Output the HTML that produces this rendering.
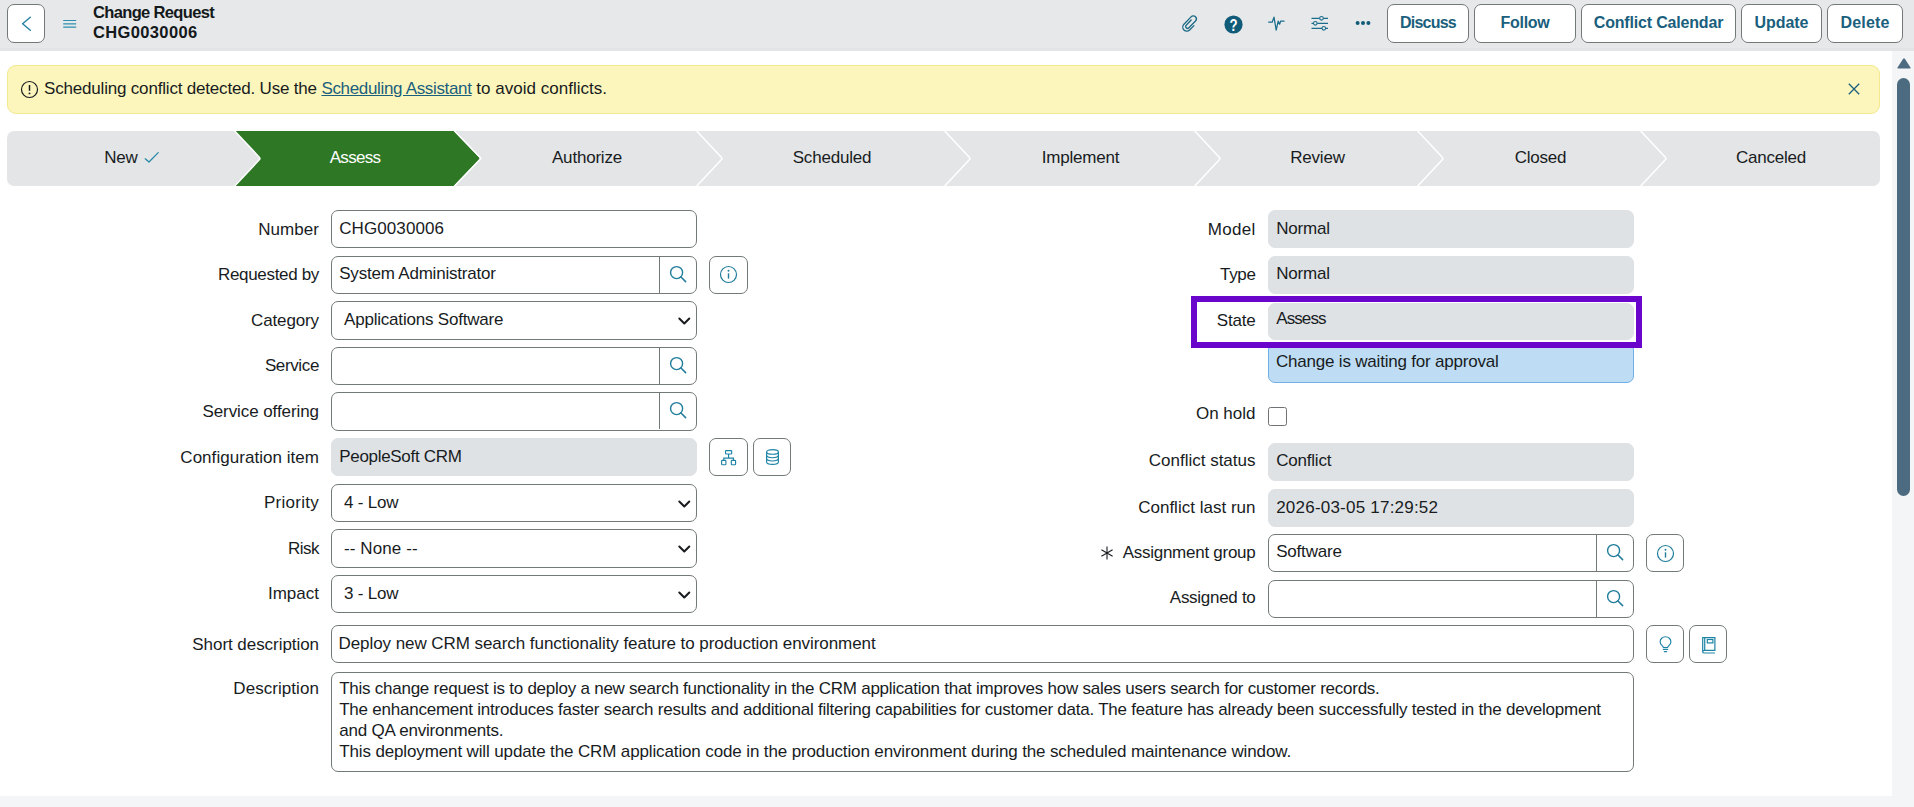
<!DOCTYPE html>
<html lang="en">
<head>
<meta charset="utf-8">
<title>Change Request CHG0030006</title>
<style>
*{box-sizing:border-box;margin:0;padding:0}
html,body{width:1914px;height:807px;overflow:hidden;background:#f4f5f7}
body{font-family:"Liberation Sans",sans-serif;font-size:17px;color:#181c1e;letter-spacing:-0.2px;position:relative}
.abs{position:absolute}
#hdr{position:absolute;left:0;top:0;width:1914px;height:51px;background:#e7e8ea;border-bottom:3px solid #e3e4e5}
#main{position:absolute;left:0;top:51px;width:1892px;height:745px;background:#fff}
.btn{position:absolute;top:4px;height:39px;background:#fff;border:1px solid #737879;border-radius:7px;color:#1a5f7d;font-weight:700;font-size:16px;line-height:36px;text-align:center;white-space:nowrap}
.title{position:absolute;left:93px;font-weight:700;font-size:16.5px;line-height:20px;color:#14191b;letter-spacing:-0.55px;white-space:nowrap}
#banner{position:absolute;left:7px;top:65px;width:1873px;height:49px;background:#fcf6bc;border:1px solid #f3e98f;border-radius:9px}
#banner .msg{position:absolute;left:36px;top:0;line-height:45px;white-space:nowrap}
#banner a{color:#1a5f7d;text-decoration:underline}
.lbl{position:absolute;height:38px;line-height:38px;text-align:right;white-space:nowrap}
.L{left:0;width:319px}
.R{left:900px;width:1355.5px;left:0}
.inp{position:absolute;height:38px;border:1px solid #737879;border-radius:7px;background:#fff;line-height:35px;padding-left:7.2px;white-space:nowrap;overflow:hidden}
.ro{border-color:#dfe2e5;background:#dfe2e5}
.c1{left:331px;width:366px}
.c2{left:1268px;width:366px}
.sel{padding-left:12px;line-height:36px}
.look{position:absolute;right:0;top:0;width:37px;height:36px;border-left:1px solid #737879}
.ibtn{position:absolute;width:39px;height:38px;border:1px solid #737879;border-radius:7px;background:#fff}
svg{position:absolute;overflow:visible}
</style>
</head>
<body>
<div id="hdr">
<div class="abs" style="left:7px;top:4px;width:38px;height:39px;background:#fff;border:1px solid #737879;border-radius:7px"></div>
<svg style="left:0;top:0" width="50" height="50" viewBox="0 0 50 50"><path d="M30.3 17.3 L22.6 23.8 L30.3 30.3" fill="none" stroke="#2a84a3" stroke-width="1.5" stroke-linecap="round" stroke-linejoin="round"/></svg>
<svg style="left:63px;top:19px" width="14" height="10" viewBox="0 0 14 10"><path d="M0.2 1.5H13.2M0.2 4.8H13.2M0.2 8.1H13.2" fill="none" stroke="#2a8fb0" stroke-width="1.2"/></svg>
<div class="title" style="top:2px;letter-spacing:-0.65px">Change Request</div>
<div class="title" style="top:22px;letter-spacing:0.36px">CHG0030006</div>
<svg style="left:1175px;top:8px" width="30" height="30" viewBox="0 0 30 30"><path transform="translate(14.8 15.4) scale(0.9) translate(-15.2 -15.6)" d="M19.8 18.1 L15.0 23.0 C13.2 24.8 10.4 24.6 8.7 22.9 C7.0 21.2 7.0 18.4 8.7 16.6 L16.6 8.4 C18.0 6.9 20.2 6.9 21.5 8.2 C22.8 9.5 22.8 11.6 21.5 13.0 L14.2 20.4 C13.3 21.3 12.0 21.3 11.2 20.5 C10.4 19.7 10.4 18.4 11.2 17.6 L16.7 11.8" fill="none" stroke="#1b6a86" stroke-width="1.45" stroke-linecap="round"/></svg>
<svg style="left:1224px;top:15px" width="19" height="19" viewBox="0 0 19 19"><circle cx="9.5" cy="9.5" r="9.1" fill="#0f5b78"/><text transform="translate(9.5 15.7) scale(0.8 1)" x="0" y="0" text-anchor="middle" font-family="Liberation Sans, sans-serif" font-weight="700" font-size="16.5" fill="#fff" letter-spacing="0">?</text></svg>
<svg style="left:1268px;top:16px" width="17" height="16" viewBox="0 0 17 16"><path d="M0.7 6.2H4.2L6 1.2L8.2 14.2L10.2 5.2L11.6 8.2L12.6 5.2H16" fill="none" stroke="#1a6d8c" stroke-width="1.25" stroke-linejoin="round" stroke-linecap="round"/></svg>
<svg style="left:1311px;top:16px" width="18" height="15" viewBox="0 0 18 15"><path d="M0.5 2.3H17M0.5 7.3H17M0.5 12.3H17" fill="none" stroke="#1a6d8c" stroke-width="1.2"/><circle cx="10.5" cy="2.3" r="1.8" fill="#e7e8ea" stroke="#1a6d8c" stroke-width="1.1"/><circle cx="4.3" cy="7.3" r="1.8" fill="#e7e8ea" stroke="#1a6d8c" stroke-width="1.1"/><circle cx="12.8" cy="12.3" r="1.8" fill="#e7e8ea" stroke="#1a6d8c" stroke-width="1.1"/></svg>
<svg style="left:1355px;top:20px" width="16" height="6" viewBox="0 0 16 6"><circle cx="2.6" cy="3" r="2" fill="#0f5b78"/><circle cx="8" cy="3" r="2" fill="#0f5b78"/><circle cx="13.4" cy="3" r="2" fill="#0f5b78"/></svg>
<div class="btn" style="left:1387px;width:82px;letter-spacing:-0.8px">Discuss</div>
<div class="btn" style="left:1474px;width:102px;letter-spacing:-0.31px">Follow</div>
<div class="btn" style="left:1581px;width:155px;letter-spacing:-0.18px">Conflict Calendar</div>
<div class="btn" style="left:1741px;width:81px;letter-spacing:-0.07px">Update</div>
<div class="btn" style="left:1827px;width:76px;letter-spacing:0.18px">Delete</div>
</div>
<div id="main"></div>
<div id="banner">
<svg style="left:12px;top:14px" width="19" height="19" viewBox="0 0 19 19"><circle cx="9.5" cy="9.5" r="8" fill="none" stroke="#181c1e" stroke-width="1.2"/><path d="M9.5 5V10.8" stroke="#181c1e" stroke-width="1.5"/><circle cx="9.5" cy="13.4" r="0.95" fill="#181c1e"/></svg>
<div class="msg"><span style="letter-spacing:-0.185px">Scheduling conflict detected. Use the </span><a style="letter-spacing:-0.335px">Scheduling Assistant</a><span style="letter-spacing:0.015px"> to avoid conflicts.</span></div>
<svg style="left:1840px;top:17px" width="12" height="12" viewBox="0 0 12 12"><path d="M0.8 0.8L11.2 11.2M11.2 0.8L0.8 11.2" stroke="#1a5f7d" stroke-width="1.3" fill="none"/></svg>
</div>
<svg style="left:7px;top:131px" width="1873" height="55" viewBox="0 0 1873 55">
<defs><clipPath id="fc"><rect x="0" y="0" width="1873" height="55" rx="7" ry="7"/></clipPath></defs>
<g clip-path="url(#fc)"><rect x="0" y="0" width="1873" height="55" fill="#e4e5e7"/>
<path d="M227.3 0 H446.8 L471.9 26.3 Q472.9 27.4 471.9 28.5 L446.8 55 H227.3 L253.3 27.5 Z" fill="#2e7725"/>
<path d="M226.8 -1 L252.3 26.2 Q253.5 27.5 252.3 28.8 L226.8 56" fill="none" stroke="#fff" stroke-width="1.5" stroke-linejoin="round"/>
<path d="M446.6 -1 L473.2 26.6 Q474 27.4 473.2 28.2 L446.6 56" fill="none" stroke="#fff" stroke-width="1.5" stroke-linejoin="round"/>
<path d="M688.8 -1 L714.3 26.2 Q715.5 27.5 714.3 28.8 L688.8 56" fill="none" stroke="#fff" stroke-width="1.5" stroke-linejoin="round"/>
<path d="M936.8 -1 L962.3 26.2 Q963.5 27.5 962.3 28.8 L936.8 56" fill="none" stroke="#fff" stroke-width="1.5" stroke-linejoin="round"/>
<path d="M1186.8 -1 L1212.3 26.2 Q1213.5 27.5 1212.3 28.8 L1186.8 56" fill="none" stroke="#fff" stroke-width="1.5" stroke-linejoin="round"/>
<path d="M1409.8 -1 L1435.3 26.2 Q1436.5 27.5 1435.3 28.8 L1409.8 56" fill="none" stroke="#fff" stroke-width="1.5" stroke-linejoin="round"/>
<path d="M1632.8 -1 L1658.3 26.2 Q1659.5 27.5 1658.3 28.8 L1632.8 56" fill="none" stroke="#fff" stroke-width="1.5" stroke-linejoin="round"/>
</g>
<text x="114" y="31.6" text-anchor="middle" font-family="Liberation Sans, sans-serif" font-size="17" fill="#181c1e">New</text>
<text x="348" y="31.6" text-anchor="middle" font-family="Liberation Sans, sans-serif" font-size="17" fill="#fff" letter-spacing="-0.7">Assess</text>
<text x="580" y="31.6" text-anchor="middle" font-family="Liberation Sans, sans-serif" font-size="17" fill="#181c1e">Authorize</text>
<text x="825" y="31.6" text-anchor="middle" font-family="Liberation Sans, sans-serif" font-size="17" fill="#181c1e">Scheduled</text>
<text x="1073.5" y="31.6" text-anchor="middle" font-family="Liberation Sans, sans-serif" font-size="17" fill="#181c1e">Implement</text>
<text x="1310.5" y="31.6" text-anchor="middle" font-family="Liberation Sans, sans-serif" font-size="17" fill="#181c1e">Review</text>
<text x="1533.5" y="31.6" text-anchor="middle" font-family="Liberation Sans, sans-serif" font-size="17" fill="#181c1e">Closed</text>
<text x="1764" y="31.6" text-anchor="middle" font-family="Liberation Sans, sans-serif" font-size="17" fill="#181c1e">Canceled</text>
<path d="M138.2 27.8 L142 31 L151.2 21.6" fill="none" stroke="#2587a6" stroke-width="1.25" stroke-linecap="round" stroke-linejoin="round"/>
</svg>
<svg style="left:1892px;top:50px" width="22" height="757" viewBox="0 0 22 757"><path d="M5.5 17.5 L11 9 Q12 7.6 13 9 L18.5 17.5 Q19 18.6 17.8 18.6 H6.2 Q5 18.6 5.5 17.5Z" fill="#4d6b80"/><rect x="5" y="28" width="13" height="418" rx="6.5" fill="#4d6b80"/></svg>
<div class="abs" style="left:1268px;top:343px;width:366px;height:40px;background:#bedcf3;border:1px solid #6fb0e8;border-radius:7px;padding:8px 0 0 7px;line-height:20px;white-space:nowrap">Change is waiting for approval</div>
<div class="lbl L" style="top:211px;letter-spacing:0.05px">Number</div><div class="inp c1" style="top:210px;letter-spacing:0.1px">CHG0030006</div>
<div class="lbl L" style="top:256px;letter-spacing:-0.325px">Requested by</div><div class="inp c1" style="top:256px;line-height:33px">System Administrator<div class="look"><svg style="left:9px;top:8px" width="19" height="19" viewBox="0 0 19 19"><circle cx="7.6" cy="7.6" r="6" fill="none" stroke="#1f7c9b" stroke-width="1.4"/><path d="M12 12L16.6 16.6" stroke="#1f7c9b" stroke-width="1.5" stroke-linecap="round"/></svg></div></div><div class="ibtn" style="left:709px;top:256px"><svg style="left:9px;top:8px" width="19" height="19" viewBox="0 0 19 19"><circle cx="9.5" cy="9.5" r="8" fill="none" stroke="#1f7c9b" stroke-width="1.2"/><path d="M9.5 8.3V13.6" stroke="#1f7c9b" stroke-width="1.4"/><circle cx="9.5" cy="5.8" r="0.95" fill="#1f7c9b"/></svg></div>
<div class="lbl L" style="top:302px;letter-spacing:-0.125px">Category</div><div class="inp c1 sel" style="top:301px;height:39px">Applications Software<svg style="right:5px;top:14.5px" width="14" height="9" viewBox="0 0 14 9"><path d="M2.3 1.5L7.3 6.5L12.3 1.5" fill="none" stroke="#181c1e" stroke-width="2" stroke-linecap="round" stroke-linejoin="round"/></svg></div>
<div class="lbl L" style="top:347px;letter-spacing:-0.37px">Service</div><div class="inp c1" style="top:347px"><div class="look"><svg style="left:9px;top:8px" width="19" height="19" viewBox="0 0 19 19"><circle cx="7.6" cy="7.6" r="6" fill="none" stroke="#1f7c9b" stroke-width="1.4"/><path d="M12 12L16.6 16.6" stroke="#1f7c9b" stroke-width="1.5" stroke-linecap="round"/></svg></div></div>
<div class="lbl L" style="top:393px;letter-spacing:-0.08px">Service offering</div><div class="inp c1" style="top:392px;height:39px"><div class="look"><svg style="left:9px;top:8px" width="19" height="19" viewBox="0 0 19 19"><circle cx="7.6" cy="7.6" r="6" fill="none" stroke="#1f7c9b" stroke-width="1.4"/><path d="M12 12L16.6 16.6" stroke="#1f7c9b" stroke-width="1.5" stroke-linecap="round"/></svg></div></div>
<div class="lbl L" style="top:439px;letter-spacing:0.04px">Configuration item</div><div class="inp c1 ro" style="top:438px;letter-spacing:-0.3px">PeopleSoft CRM</div><div class="ibtn" style="left:709px;top:438px"><svg style="left:10.9px;top:10.8px" width="15" height="15.4" viewBox="0 0 15 15.4"><g fill="none" stroke="#1e84a6" stroke-width="1.15"><rect x="4.5" y="0.6" width="6.2" height="3.4" rx="0.7"/><rect x="0.6" y="10.4" width="4.3" height="4.4" rx="0.7"/><rect x="10.3" y="10.4" width="4.3" height="4.4" rx="0.7"/><path d="M7.6 4V8.2M2.75 10.4V8.2H12.45V10.4"/></g></svg></div><div class="ibtn" style="left:753px;top:438px;width:38px"><svg style="left:11.6px;top:9.9px" width="13" height="16" viewBox="0 0 13 16"><g fill="none" stroke="#1e84a6" stroke-width="1.15"><ellipse cx="6.5" cy="2.9" rx="5.9" ry="2.3"/><path d="M0.6 2.9V12.9C0.6 14.2 3.2 15.3 6.5 15.3S12.4 14.2 12.4 12.9V2.9"/><path d="M0.6 6.3C0.6 7.6 3.2 8.7 6.5 8.7S12.4 7.6 12.4 6.3"/><path d="M0.6 9.6C0.6 10.9 3.2 12 6.5 12S12.4 10.9 12.4 9.6"/></g></svg></div>
<div class="lbl L" style="top:484px;letter-spacing:0.275px">Priority</div><div class="inp c1 sel" style="top:484px">4 - Low<svg style="right:5px;top:14.5px" width="14" height="9" viewBox="0 0 14 9"><path d="M2.3 1.5L7.3 6.5L12.3 1.5" fill="none" stroke="#181c1e" stroke-width="2" stroke-linecap="round" stroke-linejoin="round"/></svg></div>
<div class="lbl L" style="top:530px;letter-spacing:-0.5px">Risk</div><div class="inp c1 sel" style="top:529px;height:39px;line-height:38px;letter-spacing:0.1px">-- None --<svg style="right:5px;top:14.5px" width="14" height="9" viewBox="0 0 14 9"><path d="M2.3 1.5L7.3 6.5L12.3 1.5" fill="none" stroke="#181c1e" stroke-width="2" stroke-linecap="round" stroke-linejoin="round"/></svg></div>
<div class="lbl L" style="top:575px;letter-spacing:0px">Impact</div><div class="inp c1 sel" style="top:575px">3 - Low<svg style="right:5px;top:14.5px" width="14" height="9" viewBox="0 0 14 9"><path d="M2.3 1.5L7.3 6.5L12.3 1.5" fill="none" stroke="#181c1e" stroke-width="2" stroke-linecap="round" stroke-linejoin="round"/></svg></div>
<div class="lbl L" style="top:626px;letter-spacing:-0.05px">Short description</div><div class="inp" style="left:331px;width:1303px;top:625px;padding-left:6.5px;letter-spacing:-0.063px">Deploy new CRM search functionality feature to production environment</div><div class="ibtn" style="left:1646px;top:625px;width:38px"><svg style="left:11.9px;top:10px" width="13" height="17" viewBox="0 0 13 17"><g fill="none" stroke="#1e84a6" stroke-width="1.15" stroke-linecap="round"><path d="M4.4 11.5C4.4 9.9 1.1 8.9 1.1 5.9C1.1 3 3.5 0.7 6.5 0.7S11.9 3 11.9 5.9C11.9 8.9 8.6 9.9 8.6 11.5Z"/><path d="M4.4 13.4H8.6M5.3 15.6H7.7"/></g></svg></div><div class="ibtn" style="left:1689px;top:625px;width:38px"><svg style="left:11.8px;top:10.9px" width="14" height="17" viewBox="0 0 14 17"><g fill="none" stroke="#1e84a6" stroke-width="1.2"><path d="M0.7 14.3V0.7H12.9V13.4H2.4C1.3 13.4 0.7 13.9 0.7 14.7S1.3 16 2.4 16H12.9"/><path d="M2.7 0.7V13.4"/><rect x="5.3" y="2.5" width="5.6" height="3.4"/></g></svg></div>
<div class="lbl" style="left:900px;width:355.5px;top:211px;letter-spacing:0.3px">Model</div><div class="inp c2 ro" style="top:210px">Normal</div>
<div class="lbl" style="left:900px;width:355.5px;top:256px;letter-spacing:-0.37px">Type</div><div class="inp c2 ro" style="top:256px;line-height:33px">Normal</div>
<div class="lbl" style="left:900px;width:355.5px;top:302px">State</div><div class="inp c2 ro" style="top:303px;height:37px;line-height:30px;letter-spacing:-0.9px">Assess</div>
<div class="lbl" style="left:900px;width:355.5px;top:395px;letter-spacing:0px">On hold</div><div class="abs" style="left:1268px;top:407px;width:19px;height:19px;border:1px solid #6e7274;border-radius:2.5px;background:#fff"></div>
<div class="lbl" style="left:900px;width:355.5px;top:442px;letter-spacing:0px">Conflict status</div><div class="inp c2 ro" style="top:443px;line-height:33px">Conflict</div>
<div class="lbl" style="left:900px;width:355.5px;top:489px;letter-spacing:0.01px">Conflict last run</div><div class="inp c2 ro" style="top:489px;letter-spacing:0.22px">2026-03-05 17:29:52</div>
<div class="lbl" style="left:900px;width:355.5px;top:534px;letter-spacing:-0.26px">Assignment group</div><div class="inp c2" style="top:534px;line-height:33px">Software<div class="look"><svg style="left:9px;top:8px" width="19" height="19" viewBox="0 0 19 19"><circle cx="7.6" cy="7.6" r="6" fill="none" stroke="#1f7c9b" stroke-width="1.4"/><path d="M12 12L16.6 16.6" stroke="#1f7c9b" stroke-width="1.5" stroke-linecap="round"/></svg></div></div><div class="ibtn" style="left:1646px;top:534px;width:38px"><svg style="left:9px;top:9.3px" width="19" height="19" viewBox="0 0 19 19"><circle cx="9.5" cy="9.5" r="8" fill="none" stroke="#1f7c9b" stroke-width="1.2"/><path d="M9.5 8.3V13.6" stroke="#1f7c9b" stroke-width="1.4"/><circle cx="9.5" cy="5.8" r="0.95" fill="#1f7c9b"/></svg></div>
<div class="lbl" style="left:900px;width:355.5px;top:579px;letter-spacing:-0.29px">Assigned to</div><div class="inp c2" style="top:580px"><div class="look"><svg style="left:9px;top:8px" width="19" height="19" viewBox="0 0 19 19"><circle cx="7.6" cy="7.6" r="6" fill="none" stroke="#1f7c9b" stroke-width="1.4"/><path d="M12 12L16.6 16.6" stroke="#1f7c9b" stroke-width="1.5" stroke-linecap="round"/></svg></div></div>
<svg style="left:1100px;top:546px" width="14" height="14" viewBox="0 0 14 14"><path d="M7 0.5V13.5M1.4 3.7L12.6 10.3M12.6 3.7L1.4 10.3" stroke="#181c1e" stroke-width="1.1" fill="none"/></svg>
<div class="abs" style="left:1191px;top:296px;width:451px;height:52px;border:6px solid #6a06cb"></div>
<div class="lbl L" style="top:670px;letter-spacing:0.06px">Description</div>
<div class="inp" style="left:331px;width:1303px;top:672px;height:100px;line-height:21px;padding-top:5px;white-space:normal"><span style="letter-spacing:-0.2475px">This change request is to deploy a new search functionality in the CRM application that improves how sales users search for customer records.</span><br><span style="letter-spacing:-0.227px">The enhancement introduces faster search results and additional filtering capabilities for customer data. The feature has already been successfully tested in the development</span><br>and QA environments.<br><span style="letter-spacing:-0.129px">This deployment will update the CRM application code in the production environment during the scheduled maintenance window.</span></div>
</body>
</html>
